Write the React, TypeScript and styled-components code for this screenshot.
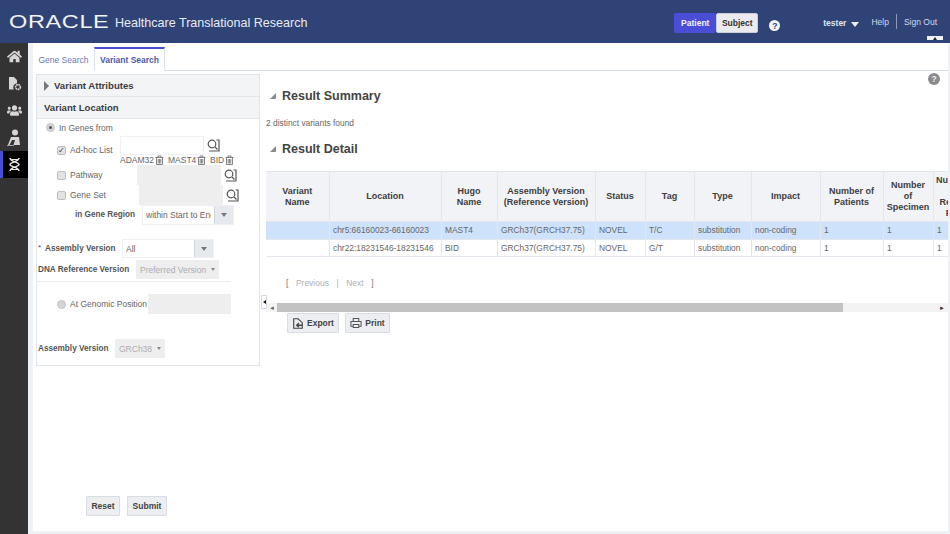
import React from "react";
import styled, { createGlobalStyle } from "styled-components";
import { FaHome, FaUsers } from "react-icons/fa";

const GlobalStyle = createGlobalStyle`
  html, body {
    margin: 0;
    padding: 0;
    height: 534px;
    overflow: hidden;
    background: #fff;
    font-family: "Liberation Sans", Arial, sans-serif;
    color: #555;
  }
  * { box-sizing: border-box; }
`;

const Page = styled.div`
  width: 950px;
  height: 534px;
  display: flex;
  flex-direction: column;
  overflow: hidden;
`;

const Header = styled.header`
  position: relative;
  height: 43px;
  flex: none;
  background: #2f4377;
  display: flex;
  align-items: center;
  padding: 0 13px 0 9px;
  color: #fff;
`;

const Logo = styled.span`
  font-size: 18.5px;
  font-weight: 400;
  letter-spacing: 0.5px;
  width: 100px;
  margin-right: 6px;
  color: #f2f3f6;
  transform: scaleX(1.27);
  transform-origin: left center;
  white-space: nowrap;
`;

const AppTitle = styled.span`
  font-size: 12.55px;
  color: #e9ecf3;
  margin-top: 3px;
`;

const ContextSwitch = styled.div`
  margin-left: auto;
  display: flex;
  margin-top: 3px;
`;

const ContextButton = styled.div<{ $active?: boolean }>`
  width: 42px;
  height: 20px;
  display: flex;
  align-items: center;
  justify-content: center;
  font-size: 8.5px;
  font-weight: bold;
  border-radius: 2px;
  background: ${p => (p.$active ? "#4a4dd6" : "#e9ebee")};
  color: ${p => (p.$active ? "#f2f2fb" : "#333")};
  border: ${p => (p.$active ? "none" : "1px solid #c9ced6")};
`;

const HelpDot = styled.span<{ $grey?: boolean }>`
  width: ${p => (p.$grey ? 12 : 11)}px;
  height: ${p => (p.$grey ? 12 : 11)}px;
  border-radius: 50%;
  background: ${p => (p.$grey ? "#8b8b8f" : "#f4f5f8")};
  color: ${p => (p.$grey ? "#eee" : "#2f4377")};
  font-size: 8.5px;
  font-weight: bold;
  display: flex;
  align-items: center;
  justify-content: center;
`;

const HeaderHelp = styled(HelpDot)`
  margin: 8px 0 0 11px;
`;

const UserName = styled.span`
  margin: 3px 0 0 43px;
  font-size: 8.5px;
  font-weight: bold;
  color: #dfe3ee;
`;

const Caret = styled.span`
  margin: 6px 0 0 5px;
  width: 0;
  height: 0;
  border-left: 4px solid transparent;
  border-right: 4px solid transparent;
  border-top: 5px solid #eef0f6;
`;

const HeaderLink = styled.span`
  font-size: 8.5px;
  color: #d5daea;
  margin-top: 1px;
`;

const HelpLink = styled(HeaderLink)`
  margin-left: 12px;
`;

const LinkDivider = styled.span`
  width: 1px;
  height: 15px;
  margin: 0 7px;
  background: #8c98b8;
`;

const CollapseHandle = styled.span`
  position: absolute;
  right: 7px;
  bottom: 3px;
  width: 16px;
  height: 4px;
  background: #f0f1f4;
  display: flex;
  justify-content: center;
  &::after {
    content: "";
    border-left: 2px solid transparent;
    border-right: 2px solid transparent;
    border-bottom: 3px solid #222;
  }
`;

const Body = styled.div`
  flex: 1;
  display: flex;
  min-height: 0;
`;

const Sidebar = styled.nav`
  width: 28px;
  flex: none;
  background: #333333;
  display: flex;
  flex-direction: column;
`;

const NavItem = styled.div<{ $active?: boolean }>`
  height: 27px;
  display: flex;
  align-items: center;
  justify-content: center;
  color: #d6d6d6;
  background: ${p => (p.$active ? "#000" : "transparent")};
  border-left: 3px solid ${p => (p.$active ? "#4a4dd6" : "transparent")};
  padding-right: 2px;
`;

const Workspace = styled.main`
  flex: 1;
  min-width: 0;
  background: #eef1f6;
  padding: 0 2px 3px 5px;
`;

const Sheet = styled.div`
  position: relative;
  height: 100%;
  background: #fff;
  display: flex;
  flex-direction: column;
`;

const TabStrip = styled.div`
  height: 28px;
  flex: none;
  display: flex;
  align-items: flex-end;
  border-bottom: 1px solid #d9dfe8;
`;

const Tab = styled.div<{ $active?: boolean }>`
  width: ${p => (p.$active ? 71 : 61)}px;
  height: ${p => (p.$active ? 24 : 22)}px;
  margin-bottom: -1px;
  display: flex;
  align-items: center;
  justify-content: center;
  font-size: 8.5px;
  color: ${p => (p.$active ? "#4d5ba8" : "#6b78b4")};
  font-weight: ${p => (p.$active ? "bold" : "normal")};
  background: #fff;
  ${p =>
    p.$active
      ? "border: 1px solid #d9dfe8; border-top: 2px solid #4a4dd6; border-bottom: 1px solid #fff;"
      : ""}
`;

const TabBody = styled.div`
  position: relative;
  flex: 1;
  display: flex;
  min-height: 0;
  padding-left: 3px;
`;

const SearchPane = styled.div`
  width: 224px;
  flex: none;
  padding-top: 3px;
  margin-right: 6px;
`;

const Panel = styled.section`
  border: 1px solid #dfe3ea;
  padding-bottom: 7px;
`;

const AccordionHead = styled.div`
  height: 22px;
  background: #f3f4f6;
  border-bottom: 1px solid #e4e6ea;
  display: flex;
  align-items: center;
  padding-left: 7px;
  font-size: 9.6px;
  font-weight: bold;
  color: #3c3c3c;
  gap: 5px;
`;

const ClosedArrow = styled.span`
  border-top: 5px solid transparent;
  border-bottom: 5px solid transparent;
  border-left: 5px solid #777;
`;

const Row = styled.div<{ $indent: number; $h: number; $top?: number; $low?: boolean }>`
  height: ${p => p.$h}px;
  margin-top: ${p => p.$top ?? 0}px;
  padding-left: ${p => p.$indent}px;
  display: flex;
  align-items: ${p => (p.$low ? "flex-end" : "center")};
  font-size: 8.5px;
  color: #666;
`;

const FieldLabel = styled.label<{ $w?: number; $bold?: boolean }>`
  width: ${p => (p.$w ? `${p.$w}px` : "auto")};
  flex: none;
  white-space: nowrap;
  line-height: 10px;
  font-size: ${p => (p.$bold ? 8.2 : 8.5)}px;
  font-weight: ${p => (p.$bold ? "bold" : "normal")};
  color: ${p => (p.$bold ? "#555" : "#666")};
`;

const Star = styled.span`
  color: #3a3fc0;
  font-size: 8px;
  width: 7px;
  margin-top: -3px;
`;

const Radio = styled.span<{ $on?: boolean }>`
  width: 9px;
  height: 9px;
  flex: none;
  margin-right: 4px;
  border-radius: 50%;
  background: #d5d5d8;
  border: 1px solid #c4c4c8;
  display: flex;
  align-items: center;
  justify-content: center;
  &::after {
    content: "";
    width: 3px;
    height: 3px;
    border-radius: 50%;
    background: ${p => (p.$on ? "#555" : "transparent")};
  }
`;

const Check = styled.span`
  width: 9px;
  height: 9px;
  flex: none;
  margin-right: 4px;
  border-radius: 2px;
  background: #e3e3e6;
  border: 1px solid #bdbdc2;
  color: #333;
  font-size: 8px;
  line-height: 7px;
  text-align: center;
`;

const TextBox = styled.div<{ $w: number; $h: number; $disabled?: boolean }>`
  width: ${p => p.$w}px;
  height: ${p => p.$h}px;
  flex: none;
  background: ${p => (p.$disabled ? "#eeeeef" : "#fff")};
  border: ${p => (p.$disabled ? "none" : "1px solid #eef0f4")};
`;

const SearchBtn = styled.span<{ $raised?: boolean }>`
  margin: 0 0 ${p => (p.$raised ? 3 : 0)}px 3px;
  display: flex;
`;

const TagList = styled.div`
  display: flex;
  font-size: 8.5px;
  color: #666;
  padding-left: 83px;
  height: 10px;
  align-items: center;
`;

const Tag = styled.span<{ $w: number }>`
  width: ${p => p.$w}px;
  display: flex;
  align-items: center;
  gap: 1px;
`;

const Select = styled.div<{ $w: number }>`
  width: ${p => p.$w}px;
  height: 100%;
  flex: none;
  display: flex;
  border: 1px solid #eef0f4;
  background: #fff;
  font-size: 8.5px;
  color: #666;
`;

const SelectValue = styled.span`
  flex: 1;
  min-width: 0;
  overflow: hidden;
  white-space: nowrap;
  margin: 0 3px;
  line-height: 18px;
`;

const SelectArrow = styled.span`
  width: 19px;
  flex: none;
  background: #e6e9ee;
  border-left: 1px solid #d3d7de;
  display: flex;
  align-items: center;
  justify-content: center;
  &::after {
    content: "";
    border-left: 3px solid transparent;
    border-right: 3px solid transparent;
    border-top: 4px solid #777;
  }
`;

const DisabledSelect = styled.div<{ $w: number }>`
  width: ${p => p.$w}px;
  height: 100%;
  flex: none;
  background: #eeeeef;
  color: #adadb0;
  font-size: 8.5px;
  display: flex;
  align-items: center;
  justify-content: space-between;
  padding: 0 4px;
  &::after {
    content: "";
    border-left: 2px solid transparent;
    border-right: 2px solid transparent;
    border-top: 3px solid #888;
  }
`;

const Rule = styled.hr`
  width: 194px;
  height: 1px;
  margin: 2px 0 0;
  border: none;
  background: #e9ebef;
`;

const FormActions = styled.div`
  display: flex;
  gap: 7px;
  margin-top: 130px;
  padding-left: 50px;
`;

const Button = styled.button<{ $w: number }>`
  width: ${p => p.$w}px;
  height: 20px;
  padding: 0;
  display: flex;
  align-items: center;
  justify-content: center;
  gap: 3px;
  background: #eceef1;
  border: 1px solid #d8dce3;
  border-radius: 1px;
  font-family: inherit;
  font-size: 8.5px;
  font-weight: bold;
  color: #444;
`;

const Splitter = styled.span`
  position: absolute;
  left: 228px;
  top: 224px;
  width: 6px;
  height: 14px;
  background: #fff;
  border: 1px solid #d5d9e0;
  display: flex;
  align-items: center;
  justify-content: center;
  &::after {
    content: "";
    border-top: 2px solid transparent;
    border-bottom: 2px solid transparent;
    border-right: 3px solid #111;
  }
`;

const Results = styled.div`
  flex: 1;
  min-width: 0;
  display: flex;
  flex-direction: column;
`;

const HelpRow = styled.div`
  height: 17px;
  flex: none;
  display: flex;
  justify-content: flex-end;
  padding: 2px 8px 0 0;
`;

const SectionHead = styled.h2<{ $top: number }>`
  height: 16px;
  margin: ${p => p.$top}px 0 0;
  padding-left: 4px;
  display: flex;
  align-items: center;
  gap: 6px;
  font-size: 12.5px;
  font-weight: bold;
  color: #444;
`;

const OpenArrow = styled.span`
  border-left: 6px solid transparent;
  border-bottom: 6px solid #8a8a8a;
`;

const SummaryText = styled.p`
  margin: 14px 0 0;
  height: 10px;
  line-height: 10px;
  font-size: 8.4px;
  color: #666;
`;

const TableClip = styled.div`
  margin-top: 14px;
  overflow: hidden;
  flex: none;
`;

const Table = styled.table`
  border-collapse: collapse;
  table-layout: fixed;
  width: 707px;
  font-size: 8.4px;
`;

const Th = styled.th`
  height: 50px;
  padding: 0 2px;
  background: #f1f3f7;
  border: 1px solid #e3e6ec;
  border-width: 1px 1px 1px 0;
  font-weight: bold;
  font-size: 9px;
  line-height: 11px;
  color: #3d3d3d;
  text-align: center;
`;

const Tr = styled.tr<{ $selected?: boolean }>`
  background: ${p => (p.$selected ? "#cfe2fc" : "#fff")};
`;

const Td = styled.td`
  height: 17.5px;
  padding: 0 3.5px;
  border-right: 1px solid #e3e6ec;
  border-bottom: 1px solid #e3e6ec;
  color: #666;
  white-space: nowrap;
  overflow: hidden;
`;

const Pager = styled.div`
  margin: 20px 0 0 20px;
  height: 12px;
  display: flex;
  align-items: center;
  font-size: 8.5px;
  color: #b0b0b4;
  gap: 7.5px;
`;

const PagerBracket = styled.span`
  color: #777;
`;

const HScroll = styled.div`
  margin-top: 14px;
  height: 9px;
  flex: none;
  display: flex;
  align-items: center;
  background: #f3f3f4;
  color: #666;
  padding: 0 3px;
  gap: 2px;
  font-size: 6px;
`;

const ScrollThumb = styled.span`
  width: 566px;
  height: 9px;
  background: #c2c2c2;
`;

const ScrollEnd = styled.span`
  margin-left: auto;
  color: #333;
`;

const ResultActions = styled.div`
  margin-top: 1px;
  padding-left: 21px;
  display: flex;
  gap: 6px;
`;

function SearchIcon() {
  return (
    <svg width="13" height="13" viewBox="0 0 13 13" fill="none" stroke="#555" strokeWidth="1.2">
      <circle cx="5" cy="5" r="3.8" />
      <path d="M8 8l2.500 2.500M9.500 1H12v11H2" />
    </svg>
  );
}

function TrashIcon() {
  return (
    <svg width="9" height="10" viewBox="0 0 9 10" fill="none" stroke="#666" strokeWidth="0.8">
      <path d="M0.500 2.500h8M3 2.500V1h3v1.500M1.500 2.500V9.500h6V2.500M3.200 4v4.500M4.500 4v4.500M5.800 4v4.500" />
    </svg>
  );
}

function ReportIcon() {
  return (
    <svg width="12" height="13" viewBox="0 0 14 14" fill="none" stroke="#444" strokeWidth="1.3">
      <path d="M7 1.500H2v11h10V6z" />
      <path d="M12 9H5.500M8 6.500L5.500 9 8 11.500" strokeWidth="1.6" />
    </svg>
  );
}

function PrintIcon() {
  return (
    <svg width="12" height="12" viewBox="0 0 13 13" fill="none" stroke="#555" strokeWidth="1.1">
      <path d="M3.500 5V1.500h6V5M3 10H1V5h11v5h-2M3.500 8h6v3.500h-6z" />
    </svg>
  );
}

function ReportGearIcon() {
  return (
    <svg width="14" height="15" viewBox="0 0 14 15" fill="#d6d6d6">
      <path d="M1 1h5l3 3v3.200A4 4 0 0 0 6 13.500H1z" />
      <circle cx="10" cy="11" r="2.400" fill="none" stroke="#d6d6d6" strokeWidth="1.600" strokeDasharray="1.600 .5" />
    </svg>
  );
}

function ResearcherIcon() {
  return (
    <svg width="15" height="17" viewBox="0 0 15 17" fill="#d6d6d6">
      <circle cx="8" cy="3.500" r="3" />
      <path d="M4 8h8l1 8H6.500L8 11H5L2.500 16H1z" />
      <path d="M0 16.300h7v.7H0z" />
    </svg>
  );
}

function HelixIcon() {
  return (
    <svg width="13" height="15" viewBox="0 0 13 15" fill="none" stroke="#e8e8e8" strokeWidth="1.5">
      <path d="M2 1c0 4 9 4 9 6.500s-9 2.500-9 6.500M11 1c0 4-9 4-9 6.500s9 2.500 9 6.500" />
      <path d="M3 2.500h7M3 12.500h7" strokeWidth="1" />
    </svg>
  );
}

const columns = [63, 112, 56, 98, 50, 49, 57, 69, 63, 50, 40];

const rows = [
  {
    location: "chr5:66160023-66160023",
    hugo: "MAST4",
    tag: "T/C",
    selected: true,
  },
  {
    location: "chr22:18231546-18231546",
    hugo: "BID",
    tag: "G/T",
    selected: false,
  },
];

export default function App() {
  return (
    <Page>
      <GlobalStyle />
      <Header>
        <Logo>ORACLE</Logo>
        <AppTitle>Healthcare Translational Research</AppTitle>
        <ContextSwitch>
          <ContextButton $active>Patient</ContextButton>
          <ContextButton>Subject</ContextButton>
        </ContextSwitch>
        <HeaderHelp>?</HeaderHelp>
        <UserName>tester</UserName>
        <Caret />
        <HelpLink>Help</HelpLink>
        <LinkDivider />
        <HeaderLink>Sign Out</HeaderLink>
        <CollapseHandle />
      </Header>
      <Body>
        <Sidebar>
          <NavItem><FaHome size={15} /></NavItem>
          <NavItem><ReportGearIcon /></NavItem>
          <NavItem><FaUsers size={15} /></NavItem>
          <NavItem><ResearcherIcon /></NavItem>
          <NavItem $active><HelixIcon /></NavItem>
        </Sidebar>
        <Workspace>
          <Sheet>
            <TabStrip>
              <Tab>Gene Search</Tab>
              <Tab $active>Variant Search</Tab>
            </TabStrip>
            <TabBody>
              <SearchPane>
                <Panel>
                  <AccordionHead>
                    <ClosedArrow />
                    Variant Attributes
                  </AccordionHead>
                  <AccordionHead>Variant Location</AccordionHead>
                  <Row $indent={9} $h={17}>
                    <Radio $on />
                    <FieldLabel>In Genes from</FieldLabel>
                  </Row>
                  <Row $indent={20} $h={19} $low>
                    <Check>✓</Check>
                    <FieldLabel $w={50}>Ad-hoc List</FieldLabel>
                    <TextBox $w={84} $h={19} />
                    <SearchBtn $raised><SearchIcon /></SearchBtn>
                  </Row>
                  <TagList>
                    <Tag $w={48}>ADAM32<TrashIcon /></Tag>
                    <Tag $w={42}>MAST4<TrashIcon /></Tag>
                    <Tag $w={30}>BID<TrashIcon /></Tag>
                  </TagList>
                  <Row $indent={20} $h={20}>
                    <Check />
                    <FieldLabel $w={67}>Pathway</FieldLabel>
                    <TextBox $w={84} $h={20} $disabled />
                    <SearchBtn><SearchIcon /></SearchBtn>
                  </Row>
                  <Row $indent={20} $h={20}>
                    <Check />
                    <FieldLabel $w={69}>Gene Set</FieldLabel>
                    <TextBox $w={84} $h={20} $disabled />
                    <SearchBtn><SearchIcon /></SearchBtn>
                  </Row>
                  <Row $indent={38} $h={20}>
                    <FieldLabel $w={67} $bold>in Gene Region</FieldLabel>
                    <Select $w={92}>
                      <SelectValue>within Start to End</SelectValue>
                      <SelectArrow />
                    </Select>
                  </Row>
                  <Row $indent={1} $h={19} $top={14}>
                    <Star>*</Star>
                    <FieldLabel $w={77} $bold>Assembly Version</FieldLabel>
                    <Select $w={92}>
                      <SelectValue>All</SelectValue>
                      <SelectArrow />
                    </Select>
                  </Row>
                  <Row $indent={1} $h={19} $top={2}>
                    <FieldLabel $w={98} $bold>DNA Reference Version</FieldLabel>
                    <DisabledSelect $w={83}>Preferred Version</DisabledSelect>
                  </Row>
                  <Rule />
                  <Row $indent={20} $h={20} $top={12}>
                    <Radio />
                    <FieldLabel $w={78}>At Genomic Position</FieldLabel>
                    <TextBox $w={83} $h={20} $disabled />
                  </Row>
                  <Row $indent={1} $h={19} $top={25}>
                    <FieldLabel $w={77} $bold>Assembly Version</FieldLabel>
                    <DisabledSelect $w={50}>GRCh38</DisabledSelect>
                  </Row>
                </Panel>
                <FormActions>
                  <Button $w={34}>Reset</Button>
                  <Button $w={40}>Submit</Button>
                </FormActions>
              </SearchPane>
              <Splitter />
              <Results>
                <HelpRow><HelpDot $grey>?</HelpDot></HelpRow>
                <SectionHead $top={0}><OpenArrow />Result Summary</SectionHead>
                <SummaryText>2 distinct variants found</SummaryText>
                <SectionHead $top={13}><OpenArrow />Result Detail</SectionHead>
                <TableClip>
                  <Table>
                    <colgroup>
                      {columns.map((w, i) => (
                        <col key={i} style={{ width: w }} />
                      ))}
                    </colgroup>
                    <thead>
                      <tr>
                        <Th>Variant<br />Name</Th>
                        <Th>Location</Th>
                        <Th>Hugo<br />Name</Th>
                        <Th>Assembly Version<br />(Reference Version)</Th>
                        <Th>Status</Th>
                        <Th>Tag</Th>
                        <Th>Type</Th>
                        <Th>Impact</Th>
                        <Th>Number of<br />Patients</Th>
                        <Th>Number<br />of<br />Specimen</Th>
                        <Th>Number<br />of<br />Reads<br />For</Th>
                      </tr>
                    </thead>
                    <tbody>
                      {rows.map(r => (
                        <Tr key={r.location} $selected={r.selected}>
                          <Td />
                          <Td>{r.location}</Td>
                          <Td>{r.hugo}</Td>
                          <Td>GRCh37(GRCH37.75)</Td>
                          <Td>NOVEL</Td>
                          <Td>{r.tag}</Td>
                          <Td>substitution</Td>
                          <Td>non-coding</Td>
                          <Td>1</Td>
                          <Td>1</Td>
                          <Td>1</Td>
                        </Tr>
                      ))}
                    </tbody>
                  </Table>
                </TableClip>
                <Pager>
                  <PagerBracket>[</PagerBracket>
                  <span>Previous</span>
                  <span>|</span>
                  <span>Next</span>
                  <PagerBracket>]</PagerBracket>
                </Pager>
                <HScroll>
                  <span>◄</span>
                  <ScrollThumb />
                  <ScrollEnd>►</ScrollEnd>
                </HScroll>
                <ResultActions>
                  <Button $w={52}><ReportIcon />Export</Button>
                  <Button $w={45}><PrintIcon />Print</Button>
                </ResultActions>
              </Results>
            </TabBody>
          </Sheet>
        </Workspace>
      </Body>
    </Page>
  );
}
